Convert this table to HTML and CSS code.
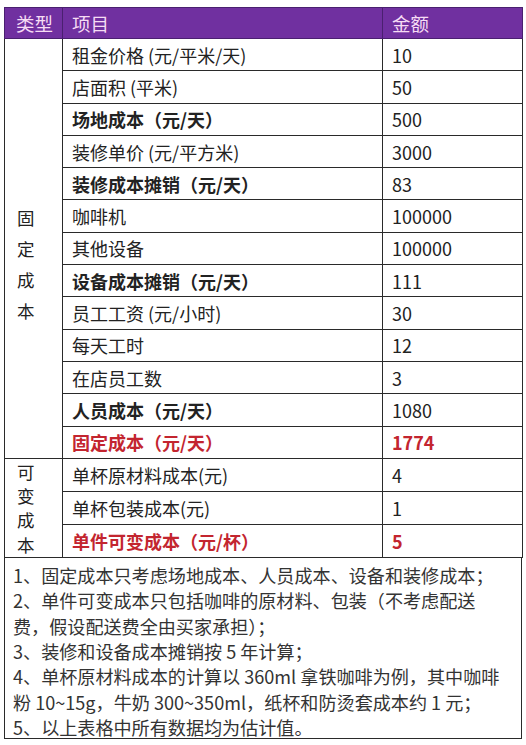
FILE: index.html
```html
<!DOCTYPE html>
<html lang="zh">
<head>
<meta charset="utf-8">
<link rel="stylesheet" href="styles.css">
</head>
<body>
<div class="sheet">
<table class="cost">
  <colgroup>
    <col class="c-type">
    <col class="c-item">
    <col class="c-amt">
  </colgroup>
  <thead>
    <tr class="head">
      <th class="h-type">类型</th>
      <th>项目</th>
      <th>金额</th>
    </tr>
  </thead>
  <tbody>
    <tr class="fx"><td class="type type-fixed" rowspan="13"><div class="vt vt-fixed">固<br>定<br>成<br>本</div></td><td>租金价格 (元/平米/天)</td><td>10</td></tr>
    <tr class="fx"><td>店面积 (平米)</td><td>50</td></tr>
    <tr class="fx bold"><td>场地成本（元/天）</td><td class="num">500</td></tr>
    <tr class="fx"><td>装修单价 (元/平方米)</td><td>3000</td></tr>
    <tr class="fx bold"><td>装修成本摊销（元/天）</td><td class="num">83</td></tr>
    <tr class="fx"><td>咖啡机</td><td>100000</td></tr>
    <tr class="fx"><td>其他设备</td><td>100000</td></tr>
    <tr class="fx bold"><td>设备成本摊销（元/天）</td><td class="num">111</td></tr>
    <tr class="fx"><td>员工工资 (元/小时)</td><td>30</td></tr>
    <tr class="fx"><td>每天工时</td><td>12</td></tr>
    <tr class="fx"><td>在店员工数</td><td>3</td></tr>
    <tr class="fx bold"><td>人员成本（元/天）</td><td class="num">1080</td></tr>
    <tr class="fx bold red"><td>固定成本（元/天）</td><td class="numb">1774</td></tr>
    <tr class="vr"><td class="type type-var" rowspan="3"><div class="vt vt-var">可<br>变<br>成<br>本</div></td><td>单杯原材料成本(元)</td><td>4</td></tr>
    <tr class="vr"><td>单杯包装成本(元)</td><td>1</td></tr>
    <tr class="vr bold red"><td>单件可变成本（元/杯）</td><td class="numb">5</td></tr>
  </tbody>
</table>
<div class="notes">
  <p>1、固定成本只考虑场地成本、人员成本、设备和装修成本；</p>
  <p>2、单件可变成本只包括咖啡的原材料、包装（不考虑配送<br>费，假设配送费全由买家承担）；</p>
  <p>3、装修和设备成本摊销按 5 年计算；</p>
  <p>4、单杯原材料成本的计算以 360ml 拿铁咖啡为例，其中咖啡<br>粉 10~15g，牛奶 300~350ml，纸杯和防烫套成本约 1 元；</p>
  <p>5、以上表格中所有数据均为估计值。</p>
</div>
</div>
</body>
</html>
```

FILE: styles.css
```css
html, body {
  margin: 0;
  padding: 0;
  background: #ffffff;
}
body {
  font-family: "Noto Sans CJK SC", "Noto Sans", sans-serif;
  color: #222;
}
.sheet {
  padding: 7px 0 0 4px;
  width: 518px;
}
.cost {
  width: 518px;
  border-collapse: collapse;
  table-layout: fixed;
  font-size: 18px;
}
.c-type { width: 58px; }
.c-item { width: 320px; }
.c-amt { width: 140px; }
.cost th, .cost td {
  border: 1px solid #2a2a2a;
  padding: 0 0 0 9px;
  text-align: left;
  vertical-align: middle;
  white-space: nowrap;
  line-height: 20px;
}
.head th {
  background: #7030a0;
  color: #f6dcf4;
  font-weight: normal;
  font-size: 18.5px;
  height: 30px;
  border-color: #4a2070;
}
.head th.h-type { padding-left: 11px; }
.fx td { height: 31.3px; }
.vr td { height: 32px; }
.bold td { font-weight: bold; }
.red td { color: #c3252f; }
.cost td.type {
  vertical-align: top;
  padding-left: 12px;
  font-weight: normal;
  color: #222;
}
.cost td.type-fixed { padding-top: 163px; }
.cost td.type-var { padding-top: 1px; }
.vt { font-size: 17.5px; }
.vt-fixed { line-height: 31px; }
.vt-var { line-height: 24.3px; }
.cost td.num { font-weight: normal; }
.cost td.numb { font-weight: bold; }
.notes {
  border: 1px solid #2a2a2a;
  border-top: none;
  height: 181px;
  padding: 5px 0 0 8px;
  font-size: 18.1px;
  line-height: 25.3px;
  color: #333;
  box-sizing: border-box;
}
.notes p {
  margin: 0;
  white-space: nowrap;
}
```
